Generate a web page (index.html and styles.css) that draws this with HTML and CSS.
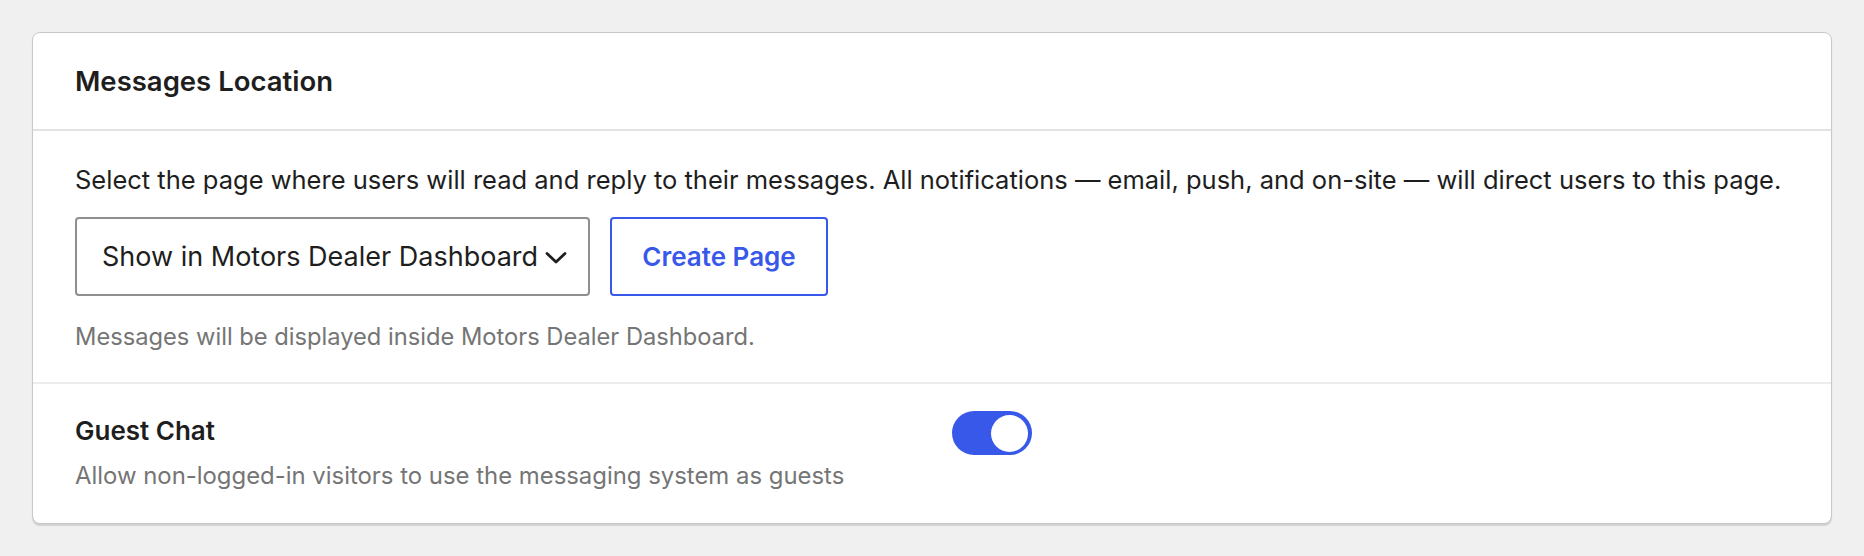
FILE: index.html
```html
<!DOCTYPE html>
<html lang="en">
<head>
<meta charset="utf-8">
<title>Messages Location</title>
<link rel="stylesheet" href="styles.css">
</head>
<body>
<div class="card">
  <div class="card-header">
    <h2 class="card-title">Messages Location</h2>
  </div>
  <div class="section section-location">
    <p class="lead">Select the page where users will read and reply to their messages. All notifications — email, push, and on-site — will direct users to this page.</p>
    <div class="controls">
      <div class="select">
        <span class="select-value">Show in Motors Dealer Dashboard</span>
        <svg class="chevron" width="22" height="14" viewBox="0 0 22 14" aria-hidden="true"><polyline points="2,2.5 11,11 20,2.5" fill="none" stroke="#1e1e1e" stroke-width="2.8" stroke-linecap="round" stroke-linejoin="round"/></svg>
      </div>
      <button class="btn-outline" type="button">Create Page</button>
    </div>
    <p class="help">Messages will be displayed inside Motors Dealer Dashboard.</p>
  </div>
  <div class="section section-guest">
    <div class="setting-text">
      <div class="setting-title">Guest Chat</div>
      <div class="setting-desc">Allow non-logged-in visitors to use the messaging system as guests</div>
    </div>
    <span class="toggle" role="switch" aria-checked="true"><span class="knob"></span></span>
  </div>
</div>
</body>
</html>
```
FILE: styles.css
```css
* { box-sizing: border-box; }
html, body { margin: 0; padding: 0; }
body {
  background: #f0f0f0;
  font-family: Inter, "Noto Sans", "Liberation Sans", sans-serif;
  color: #1e1e1e;
  padding: 32px;
}
.card {
  background: #fff;
  border: 1px solid #c8c8c8;
  border-radius: 8px;
  box-shadow: 0 2px 1px rgba(0,0,0,0.12);
  height: 492px;
}
.card-header {
  height: 98px;
  padding: 0 42px;
  display: flex;
  align-items: center;
  border-bottom: 2px solid #e2e2e2;
}
.card-title {
  margin: 0;
  font-size: 27.5px;
  font-weight: 600;
  line-height: 32px;
}
.section { padding: 0 42px; }
.section-location {
  padding-top: 31px;
  padding-bottom: 29px;
  border-bottom: 2px solid #ececec;
}
.lead {
  margin: 0 0 19px;
  font-size: 25.5px;
  line-height: 36px;
}
.controls {
  display: flex;
  gap: 20px;
}
.select {
  width: 515px;
  height: 79px;
  border: 2px solid #8f8f8f;
  border-radius: 4px;
  display: flex;
  align-items: center;
  padding: 0 20px 0 25px;
  font-size: 27px;
  gap: 7px;
}
.select-value { white-space: nowrap; }
.chevron { flex: none; margin-top: 3px; }
.btn-outline {
  width: 218px;
  height: 79px;
  border: 2px solid #3858e9;
  border-radius: 4px;
  background: #fff;
  color: #3858e9;
  font-family: inherit;
  font-size: 26px;
  font-weight: 600;
  padding: 0;
}
.help {
  margin: 25px 0 0;
  font-size: 23.7px;
  line-height: 32px;
  color: #757575;
}
.section-guest {
  display: flex;
  align-items: flex-start;
  padding-top: 31px;
}
.setting-text { width: 877px; }
.setting-title {
  font-size: 26px;
  font-weight: 600;
  line-height: 32px;
}
.setting-desc {
  margin-top: 13px;
  font-size: 23.9px;
  line-height: 32px;
  color: #757575;
}
.toggle {
  margin-top: -4px;
  width: 80px;
  height: 44px;
  border-radius: 22px;
  background: #3858e9;
  display: flex;
  align-items: center;
  justify-content: flex-end;
  padding: 0 4px;
}
.knob {
  width: 37px;
  height: 37px;
  border-radius: 50%;
  background: #fff;
}
```
